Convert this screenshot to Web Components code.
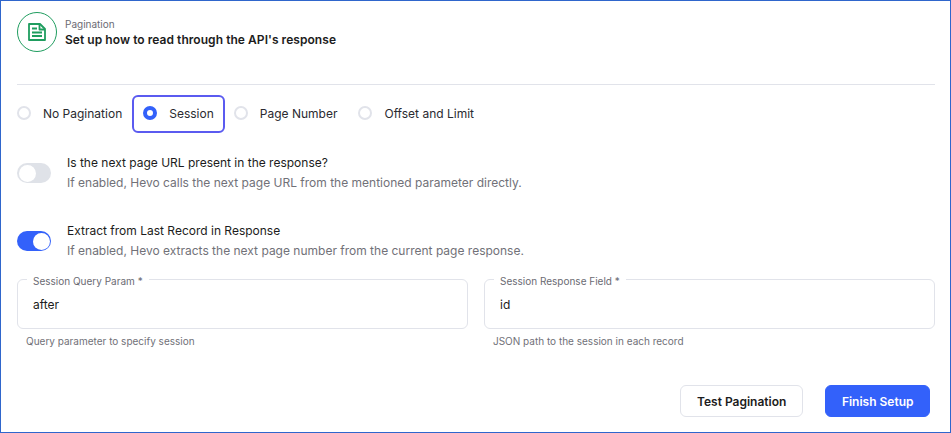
<!DOCTYPE html>
<html lang="en"><head><meta charset="utf-8"><title>Pagination</title>
<style>
html,body{margin:0;padding:0;background:#fff}
body{font-family:Inter,"Liberation Sans",sans-serif;color:#1c1c20}
</style></head><body>
<pg-panel>
  <pg-header slot="header" overline="Pagination" heading="Set up how to read through the API's response"></pg-header>
  <pg-radio slot="radios" first label="No Pagination"></pg-radio>
  <pg-radio slot="radios" label="Session" checked focused></pg-radio>
  <pg-radio slot="radios" label="Page Number"></pg-radio>
  <pg-radio slot="radios" last label="Offset and Limit"></pg-radio>
  <pg-toggle slot="t1" title="Is the next page URL present in the response?" desc="If enabled, Hevo calls the next page URL from the mentioned parameter directly."></pg-toggle>
  <pg-toggle slot="t2" on title="Extract from Last Record in Response" desc="If enabled, Hevo extracts the next page number from the current page response."></pg-toggle>
  <pg-field slot="f1" label="Session Query Param *" value="after" hint="Query parameter to specify session"></pg-field>
  <pg-field slot="f2" label="Session Response Field *" value="id" hint="JSON path to the session in each record"></pg-field>
  <pg-button slot="b1" label="Test Pagination"></pg-button>
  <pg-button slot="b2" primary label="Finish Setup"></pg-button>
</pg-panel>
<script>
function def(name, html, init){
  customElements.define(name, class extends HTMLElement{
    connectedCallback(){
      if(this.shadowRoot) return;
      const s=this.attachShadow({mode:'open'});
      s.innerHTML=html;
      if(init) init(this,s);
    }
  });
}
const txt=(s,sel,v)=>{s.querySelector(sel).textContent=v};
def('pg-panel',`<style>
:host{display:block;box-sizing:border-box;width:951px;height:433px;border:1px solid #2f66cc;padding:11px 15px 0 16px}
.rule{height:1px;background:#e1e3ea;margin:32px 0 0}
.radios{display:flex;margin:10px 0 0 -9px}
.t1{margin-top:21px}
.t2{margin-top:30px}
.fields{display:grid;grid-template-columns:451px 451px;gap:16px;margin-top:19px}
.actions{display:flex;justify-content:flex-end;gap:22px;margin-top:37px;padding-right:5px}
</style>
<slot name="header"></slot><div class="rule"></div>
<div class="radios"><slot name="radios"></slot></div>
<div class="t1"><slot name="t1"></slot></div>
<div class="t2"><slot name="t2"></slot></div>
<div class="fields"><slot name="f1"></slot><slot name="f2"></slot></div>
<div class="actions"><slot name="b1"></slot><slot name="b2"></slot></div>`);
def('pg-header',`<style>
:host{display:flex;align-items:center;gap:8px;height:40px}
.c{box-sizing:border-box;width:40px;height:40px;border:1px solid #1f9d5f;border-radius:50%;display:flex;align-items:center;justify-content:center}
.o{font-size:10px;line-height:14px;color:#6b6b73;margin-top:1px}
.h{font-size:12px;line-height:16px;font-weight:600;color:#1c1c20;margin-top:1px;letter-spacing:.05px}
svg{display:block}
</style>
<div class="c"><svg width="20" height="20" viewBox="0 0 20 20" fill="none" stroke="#1f9d5f" stroke-width="1.8" stroke-linejoin="round"><path d="M2 2H13L18 7V18H2Z"/><path d="M12.5 2V7.5H18"/><path d="M5 6.5H10M5 10.5H15M5 14H15"/></svg></div>
<div><div class="o"></div><div class="h"></div></div>`,(e,s)=>{txt(s,'.o',e.getAttribute('overline'));txt(s,'.h',e.getAttribute('heading'))});
def('pg-radio',`<style>
:host{display:flex;box-sizing:border-box;height:38px;padding:0 9px 2px;align-items:center;gap:12px;font-size:12px;color:#2a2a30}
:host([first]){padding-right:10px}
:host([focused]){border:2px solid #5b5bf0;border-radius:6px}
:host([last]){margin-left:3px}
.r{box-sizing:border-box;width:14px;height:14px;border-radius:50%;border:2px solid #e1e3ea;background:#fff;flex:none}
:host([checked]) .r{border:4.5px solid #3361fa}
</style><span class="r"></span><span class="l"></span>`,(e,s)=>txt(s,'.l',e.getAttribute('label')));
def('pg-toggle',`<style>
:host{display:flex;gap:16px;align-items:center}
.t{width:34px;height:20px;border-radius:10px;background:#dfe2e8;position:relative;flex:none}
.k{position:absolute;left:1.5px;top:1.5px;width:17px;height:17px;border-radius:50%;background:#fff}
:host([on]) .t{background:#3361fa}
:host([on]) .k{left:15.5px}
.a{font-size:12px;line-height:18px;color:#1c1c20}
.b{font-size:12px;line-height:18px;color:#717178;margin-top:2px}
</style><div class="t"><div class="k"></div></div><div><div class="a"></div><div class="b"></div></div>`,(e,s)=>{txt(s,'.a',e.getAttribute('title'));txt(s,'.b',e.getAttribute('desc'))});
def('pg-field',`<style>
:host{display:block;position:relative}
.box{box-sizing:border-box;height:50px;border:1px solid #e1e3ea;border-radius:6px;padding:16px 15px 0;font-size:12px;line-height:18px;color:#1c1c20}
.l{position:absolute;left:10px;top:-5px;padding:0 6px;background:#fff;font-size:10px;line-height:14px;color:#6b6b73}
.h{font-size:10px;line-height:14px;color:#717178;padding:5px 0 0 9px}
</style><div class="box"></div><div class="l"></div><div class="h"></div>`,(e,s)=>{txt(s,'.box',e.getAttribute('value'));txt(s,'.l',e.getAttribute('label'));txt(s,'.h',e.getAttribute('hint'))});
def('pg-button',`<style>
:host{display:flex;box-sizing:border-box;height:32px;align-items:center;justify-content:center;padding:0 16px;border:1px solid #e1e3ea;border-radius:6px;font-size:12px;font-weight:600;color:#1c1c20;background:#fff}
:host([primary]){background:#3361fa;border-color:#3361fa;color:#fff;padding:0 15.5px}
</style><span></span>`,(e,s)=>txt(s,'span',e.getAttribute('label')));
</script></body></html>
